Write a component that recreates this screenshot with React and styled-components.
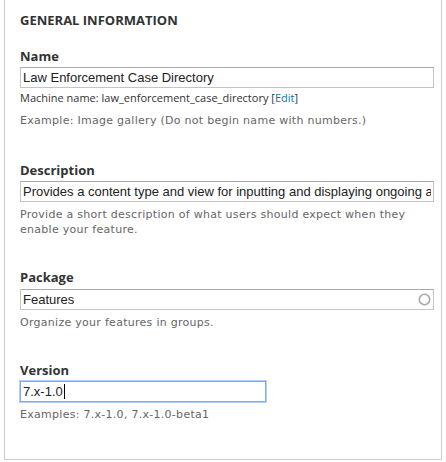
import React from "react";
import styled, { createGlobalStyle } from "styled-components";

const Global = createGlobalStyle`
  html, body { margin: 0; padding: 0; background: #fff; }
  body { font-family: "Open Sans", "DejaVu Sans", sans-serif; color: #333; }
  * { box-sizing: border-box; }
`;

const Fieldset = styled.div`
  margin-left: 4px;
  width: 438px;
  border: 1px solid #cccccc;
  border-top: none;
  padding: 12px 7px 37px 15px;
`;

const Title = styled.h2`
  margin: 0 0 20px 0;
  font-family: "Open Sans", sans-serif;
  font-weight: 700;
  font-size: 13px;
  line-height: 16px;
  text-transform: uppercase;
  color: #333;
`;

const Fields = styled.div`
  display: flex;
  flex-direction: column;
  gap: 32px;
`;

const Field = styled.div`
  display: flex;
  flex-direction: column;
  align-items: flex-start;
`;

const Label = styled.label`
  font-family: "Open Sans", sans-serif;
  font-weight: 700;
  font-size: 13px;
  line-height: 16px;
  color: #333;
  margin-bottom: ${(p) => p.$mb || 3}px;
`;

const InputWrap = styled.div`
  position: relative;
  width: ${(p) => p.$w || 414}px;
`;

const Input = styled.input`
  display: block;
  width: 100%;
  height: 21px;
  margin: 0;
  padding: 2px 2px;
  border: 1px solid #c4c4c4;
  border-top-color: #a9a9a9;
  border-radius: 0;
  background: #fff;
  font-family: "Liberation Sans", Arial, sans-serif;
  font-size: 13px;
  color: #222;
  outline: none;
`;

const FocusBox = styled.div`
  display: flex;
  align-items: center;
  width: 100%;
  height: 21px;
  padding: 0 2px;
  border: 1px solid #7ea8ef;
  box-shadow: 0 0 0 1px #b5cff7;
  font-family: "Liberation Sans", Arial, sans-serif;
  font-size: 13px;
  color: #222;
  white-space: pre;
`;

const Caret = styled.span`
  display: inline-block;
  width: 1px;
  height: 15px;
  background: #000;
  margin-left: 1px;
`;

const Throbber = styled.svg`
  position: absolute;
  right: 3px;
  top: 4px;
`;

const Machine = styled.div`
  margin-top: 2px;
  font-family: "Open Sans", sans-serif;
  font-size: 11px;
  line-height: 15px;
  color: #333;

  a { color: #0074bd; text-decoration: none; }
`;

const Help = styled.div`
  margin-top: ${(p) => p.$mt || 5}px;
  margin-bottom: ${(p) => p.$mb || 0}px;
  font-family: "DejaVu Sans", Verdana, sans-serif;
  font-size: 11px;
  line-height: 15px;
  letter-spacing: 0.28px;
  color: #666;
  max-width: 414px;
`;

export default function App() {
  return (
    <>
      <Global />
      <Fieldset>
        <Title>General information</Title>
        <Fields>
          <Field>
            <Label>Name</Label>
            <InputWrap>
              <Input readOnly value="Law Enforcement Case Directory" />
            </InputWrap>
            <Machine>
              Machine name: law_enforcement_case_directory [<a href="#">Edit</a>]
            </Machine>
            <Help $mt={8} $mb={2}>Example: Image gallery (Do not begin name with numbers.)</Help>
          </Field>
          <Field>
            <Label>Description</Label>
            <InputWrap>
              <Input
                readOnly
                value="Provides a content type and view for inputting and displaying ongoing and closed cases"
              />
            </InputWrap>
            <Help>Provide a short description of what users should expect when they enable your feature.</Help>
          </Field>
          <Field>
            <Label $mb={4}>Package</Label>
            <InputWrap>
              <Input readOnly value="Features" />
              <Throbber width="13" height="13" viewBox="0 0 13 13">
                <circle cx="6.5" cy="6.5" r="5.2" fill="none" stroke="#a8a8a8" strokeWidth="1.6" />
              </Throbber>
            </InputWrap>
            <Help>Organize your features in groups.</Help>
          </Field>
          <Field>
            <Label>Version</Label>
            <InputWrap $w={246}>
              <FocusBox>
                7.x-1.0
                <Caret />
              </FocusBox>
            </InputWrap>
            <Help>Examples: 7.x-1.0, 7.x-1.0-beta1</Help>
          </Field>
        </Fields>
      </Fieldset>
    </>
  );
}
